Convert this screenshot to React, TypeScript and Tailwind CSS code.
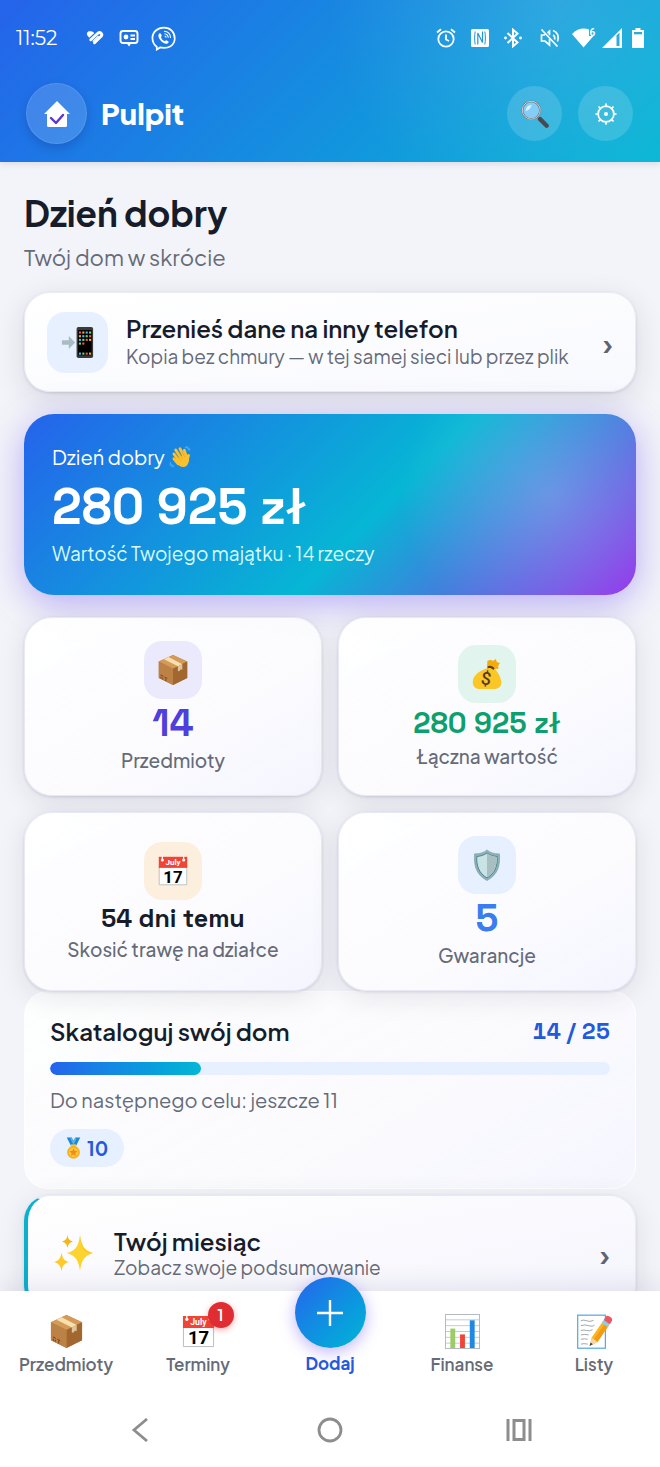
import type { ReactNode } from "react";

type IconProps = { className?: string };

function PackageIcon({ className }: IconProps) {
  return (
    <svg viewBox="0 0 36 36" className={className} aria-hidden="true">
      <path d="M18 1 34 8.500v18.500L18 35 2 27V8.500z" fill="#b3793f" />
      <path d="M18 1 34 8.500 18 16.500 2 8.500z" fill="#d39a58" />
      <path d="M18 16.500V35l16-8V8.500z" fill="#a1672f" />
      <path d="M2 8.500 18 16.500V35L2 27z" fill="#bb8145" />
      <path d="M13 3.400 28.500 11.400l-5 2.500L7.800 5.900z" fill="#f8dfae" />
      <path d="M23.500 13.900l5-2.500v6.200l-1.700-.4-1.600 1.900-1.700.2z" fill="#dec39b" />
      <path d="M4 23.500l3 1.500M4.500 25.500v2M6.500 26.500v2M8.500 26l3 1.400M10 27.500v3" stroke="#70431c" strokeWidth="1" fill="none" />
    </svg>
  );
}

function CalendarIcon({ className }: IconProps) {
  return (
    <svg viewBox="0 0 36 36" className={className} aria-hidden="true">
      <path d="M2.500 12h31v21.500h-31z" fill="#fff" stroke="#b5bcc0" />
      <path d="M2 2h32v12.500H2z" fill="#f04437" />
      <circle cx="6" cy="5.500" r="1.700" fill="#fff" />
      <circle cx="30" cy="5.500" r="1.700" fill="#fff" />
      <path d="M6 1v4M30 1v4" stroke="#fff" strokeWidth="1.300" />
      <text x="18" y="11.500" textAnchor="middle" fontSize="9" fontWeight="700" fill="#fff" fontFamily="Roboto, sans-serif">July</text>
      <text x="18" y="31" textAnchor="middle" fontSize="19" fontWeight="700" fill="#000" fontFamily="Roboto, sans-serif">17</text>
    </svg>
  );
}

function MoneyBagIcon({ className }: IconProps) {
  return (
    <svg viewBox="0 0 36 36" className={className} aria-hidden="true">
      <path d="M18 9.500 18.500 3l4-1 2 1.500L28 1l1 3.500 3.500 1-2 3.500.5 3-5 .5z" fill="#f5ab0c" />
      <path d="M19 11c4-1.500 7 0 9.500 3 3 4 6 10 5.500 15-.4 4-4 6-9 6H10c-5 0-8-3-8-8 0-9 10-13 17-16z" fill="#fcc626" />
      <path d="M18.500 9.500c3-1.500 6-.5 8 2.300l-1.500 1.700c-2-2-4-2.700-6.500-1.700z" fill="#5d3f32" />
      <text x="17" y="30" textAnchor="middle" fontSize="20" fontWeight="500" fill="#553b2d" fontFamily="Roboto, sans-serif" transform="rotate(8 17 24)">$</text>
    </svg>
  );
}

function ShieldIcon({ className }: IconProps) {
  return (
    <svg viewBox="0 0 36 36" className={className} aria-hidden="true">
      <path d="M18 1c3 3 8 4.500 14 4.500C33 19 30 29 18 35.500 6 29 3 19 4 5.500 10 5.500 15 4 18 1z" fill="#8fb0b8" stroke="#769ca5" strokeWidth=".7" />
      <path d="M18 4.500c3.500 2.500 7 3.500 11.500 4C30 19 27 27.500 18 32.500 9 27.500 6 19 6.500 8.500 11 8 14.500 7 18 4.500z" fill="#c9e3e5" stroke="#40808c" strokeWidth="1" />
      <path d="M18 5.200c3.500 2.300 7 3.400 10.800 3.800C29.300 19 26.500 27 18 31.800z" fill="#a9bec3" />
    </svg>
  );
}

function PhoneTransferIcon({ className }: IconProps) {
  const dots = ["#e95b52", "#f6a934", "#53b5f1", "#79cf74"];
  return (
    <svg viewBox="0 0 36 36" className={className} aria-hidden="true">
      <path d="M1 15.500h7.500V11L15.500 18l-7 7v-4.500H1z" fill="#a9bcc4" />
      <rect x="17" y="1" width="18" height="34" rx="2" fill="#3a3a3c" />
      <rect x="18.500" y="4.500" width="15" height="27.500" fill="#000" />
      {[6, 10, 14, 18].map((y, row) =>
        [19.500, 23.200, 26.900, 30.600].slice(0, row === 3 ? 2 : 4).map((x, col) => (
          <rect key={`${x}-${y}`} x={x} y={y} width="2.300" height="2.300" fill={dots[(row + col) % 4]} />
        ))
      )}
      {[19.500, 23.200, 26.900, 30.600].map((x, col) => (
        <rect key={x} x={x} y="29" width="2.300" height="2.300" fill={dots[(col + 2) % 4]} />
      ))}
    </svg>
  );
}

function WaveIcon({ className }: IconProps) {
  return (
    <svg viewBox="0 0 36 36" className={className} aria-hidden="true">
      <g fill="none" stroke="#fbc02d" strokeWidth="4.600" strokeLinecap="round">
        <path d="M8 13l9 12M11 6.500l10 15M18 4.500l7.500 14.500M25 7l4 13M8 21l7 8" />
        <path d="M32 15.500c-1.500 3-2 5-1.500 9" />
      </g>
      <path d="M11 21l16-8 5 8c1 7-2 13-8 13.500-5 .5-9-3-12-7z" fill="#fbc02d" />
      <path d="M11.500 13.500l7 9M15.500 9.500l6.500 11M21.500 9l4.500 9" stroke="#e39a20" strokeWidth="1" fill="none" />
      <path d="M26 2c3 0 5.500 2 6 5M28 .8c3.500.6 6 3.200 6.200 6.500M2 26c.5 3.500 3 6 6.500 6.500M1 29c1 3 3.500 5 6.500 5.500" stroke="#6ec5f5" strokeWidth="1.100" fill="none" />
    </svg>
  );
}

function MedalIcon({ className }: IconProps) {
  return (
    <svg viewBox="0 0 24 36" className={className} aria-hidden="true">
      <path d="M1 1h8l3 5 3-5h8l-6.500 13h-9z" fill="#1f86d6" />
      <path d="M9 1l3 5 3-5 2 2-5 10L6 1z" fill="#51b2ef" />
      <path d="M8 12h8v4H8z" fill="#f5c43a" />
      <circle cx="12" cy="25" r="10.500" fill="#fbb117" />
      <circle cx="12" cy="25" r="7.500" fill="#ffca3f" />
      <path d="M12 18.500l2 4.200 4.600.6-3.400 3.200.9 4.600-4.100-2.300-4.100 2.300.9-4.600-3.400-3.200 4.600-.6z" fill="#f28c1c" />
    </svg>
  );
}

function SparklesIcon({ className }: IconProps) {
  return (
    <svg viewBox="0 0 40 38" className={className} aria-hidden="true">
      <path d="M26 1c1.500 11 4 15.500 13 18-9 3-11.500 7.500-13 18-1.500-10.500-4-15-13-18 9-2.500 11.500-7 13-18z" fill="#fdd32f" />
      <path d="M26 1c1.500 11 4 15.500 13 18-7 .5-12-2-13-18z" fill="#f7c01b" opacity=".6" />
      <path d="M13.500 1c.8 4.200 2 5.500 5.500 6.500-3.500 1.200-4.700 2.500-5.500 6.500-.8-4-2-5.300-5.500-6.500 3.500-1 4.700-2.300 5.500-6.500z" fill="#f4b619" />
      <path d="M7.500 18.500c1 6 2.500 8 7.500 9.500-5 1.600-6.500 3.600-7.500 9-1-5.400-2.500-7.400-7.500-9 5-1.500 6.500-3.500 7.500-9.500z" fill="#fdc92b" />
    </svg>
  );
}

function ChartIcon({ className }: IconProps) {
  return (
    <svg viewBox="0 0 36 36" className={className} aria-hidden="true">
      <rect x=".5" y=".5" width="35" height="35" fill="#fff" stroke="#b3bbc0" />
      <path d="M1 6h34M1 12h34M1 18h34M1 24h34M1 30h34" stroke="#bcc3c7" strokeWidth=".9" />
      <path d="M5.500 15h5v20h-5z" fill="#9ccc65" />
      <path d="M15.500 21h5v14h-5z" fill="#f04437" />
      <path d="M25.500 6.500h5V35h-5z" fill="#1e88e5" />
    </svg>
  );
}

function MemoIcon({ className }: IconProps) {
  return (
    <svg viewBox="0 0 36 36" className={className} aria-hidden="true">
      <rect x=".7" y="1.200" width="28.500" height="34" fill="#fff" stroke="#5cabe0" strokeWidth="1.300" />
      <path d="M4 7q3-1.500 6 0t7-.5M4 12q4-1.500 8 0t6-.5M4 17q3-1 6 0t6-1M4 21.500q4-1 8 0M4 26q4-1 7 0M4 31q3-1 7 0" stroke="#9ea4a8" strokeWidth="1" fill="none" />
      <path d="M15 24.500 27 7l6 4.200-12 17.500-7.500 4z" fill="#fdb51d" />
      <path d="M17.500 26 29.500 8.500l3.500 2.700-12 17.500z" fill="#f59a14" />
      <path d="M15 24.500l6 4.200-7.700 4z" fill="#f7d7a5" />
      <path d="M14 29.300l2.300 1.700-3.500 1.900z" fill="#3f3f41" />
      <path d="M25.500 9.200 28 5.500l6 4.200-2.500 3.700z" fill="#89cfe5" />
      <path d="M27.500 6.200l2.600-3.900c1.300-1.800 7.500 2 6 4.500L33.800 10.500z" fill="#ee5660" />
    </svg>
  );
}

function SearchIcon({ className }: IconProps) {
  return (
    <svg viewBox="0 0 30 30" className={className} aria-hidden="true">
      <path d="M17.500 18.500l3.500 3" stroke="#8a8f94" strokeWidth="3" />
      <path d="M20.500 20.500l7 7" stroke="#474b50" strokeWidth="4.600" strokeLinecap="round" />
      <circle cx="11" cy="11" r="9.500" fill="#84cdf7" stroke="#686f75" strokeWidth="2" />
      <circle cx="11" cy="11" r="9.600" fill="none" stroke="#d3d7da" strokeWidth="1" />
      <path d="M5 12c0-4 2.500-6.500 6.500-7-1 3.500-3 6-6.500 7z" fill="#d9f2ff" />
    </svg>
  );
}

function GearIcon({ className }: IconProps) {
  return (
    <svg viewBox="0 0 24 24" className={className} fill="none" stroke="#fff" strokeWidth="1.900" strokeLinecap="round" aria-hidden="true">
      <circle cx="12" cy="12" r="8.600" />
      <path d="M12 1.200v2.500M12 20.300v2.500M1.200 12h2.500M20.300 12h2.500M4.400 4.400l1.700 1.700M17.900 17.900l1.700 1.700M4.400 19.600l1.700-1.700M17.900 6.100l1.700-1.700" />
      <circle cx="12" cy="12" r="2.200" fill="#fff" stroke="none" />
    </svg>
  );
}

function HomeCheckIcon({ className }: IconProps) {
  return (
    <svg viewBox="0 0 26 26" className={className} aria-hidden="true">
      <path d="M13 0 26 13h-3v11.500a1.500 1.500 0 0 1-1.500 1.500h-17A1.500 1.500 0 0 1 3 24.500V13H0z" fill="#fff" />
      <path d="M7 17l5 5 7-8" fill="none" stroke="#5b35d5" strokeWidth="2.400" strokeLinecap="round" strokeLinejoin="round" />
    </svg>
  );
}

function StatusBar() {
  return (
    <div className="flex h-[76px] items-center pl-4 pr-4 text-white">
      <span className="w-[70px] font-['Montserrat','Plus_Jakarta_Sans','Inter',sans-serif] text-xl">11:52</span>
      <div className="flex items-center gap-[15px]">
        <svg viewBox="0 0 18 16" className="h-4 w-[18px]" aria-hidden="true">
          <path d="M4.300 1.300C2 .8.200 3 1.200 5.200L3.200 7.700l5.200-4.600C7.200 1.800 5.800.9 4.300 1.300z" fill="#fff" />
          <path d="M4.800 9.700 11.800 3.300c2.500-2 5.200.8 3.300 3L8.500 12.800" fill="none" stroke="#fff" strokeWidth="2.900" strokeLinecap="round" />
          <path d="M6.800 11.400 12.500 6" fill="none" stroke="#fff" strokeWidth="1.400" />
        </svg>
        <svg viewBox="0 0 20 18" className="h-[18px] w-5" fill="none" stroke="#fff" strokeWidth="1.900" aria-hidden="true">
          <rect x="1.500" y="2" width="17" height="12" rx="2.500" />
          <circle cx="7" cy="8" r="2.400" fill="#fff" stroke="none" />
          <path d="M11.500 6.500h4.500M11.500 10h4.500" />
          <path d="M7.500 14h5L10 17.500z" fill="#fff" stroke="none" />
        </svg>
        <svg viewBox="0 0 26 26" className="-ml-[3px] size-[25px]" fill="none" stroke="#fff" strokeWidth="1.800" aria-hidden="true">
          <path d="M6 21.500v3l3.500-2.200c9 1.500 15-2 15.200-9.300C24.700 6 20 1.700 13.500 1.700S1.500 6 1.500 12.500c0 3.800 1.600 7 4.500 9z" />
          <path d="M8 8.500c1-1.700 2-1 3 .8.700 1.300-.7 1.600-.6 2.400.5 2 2 3.300 3.700 4 .9.300 1-1.400 2.400-.7 2.400 1.200 2.400 2 .6 3.200C13.500 20 6 12.500 8 8.500z" fill="#fff" stroke="none" />
          <path d="M13.500 5.500c4 .2 6.700 3 6.800 7M14 8c2.500.3 3.800 1.800 4 4.200M14.300 10.400c1 .2 1.400.7 1.500 1.700" strokeWidth="1.100" />
        </svg>
      </div>
      <div className="ml-auto flex items-center">
        <svg viewBox="0 0 20 20" className="mr-[15px] size-5" fill="none" stroke="#fff" strokeWidth="1.800" aria-hidden="true">
          <circle cx="10" cy="11" r="7.700" />
          <path d="M10 6.500V11.500l3 1.500M1 4.500l4-3.300M19 4.500l-4-3.300" />
        </svg>
        <svg viewBox="0 0 18 18" className="mr-[15px] size-[18px]" aria-hidden="true">
          <rect width="18" height="18" rx="1.500" fill="#fff" />
          <path d="M4.200 2.500c-.8 4-.8 9 0 13M13.800 2.500c.8 4 .8 9 0 13" stroke="#1e95df" strokeWidth="1" fill="none" />
          <path d="M6.800 15.500V4l4.700 9.500V2.500" stroke="#1e95df" strokeWidth="1.200" fill="none" />
        </svg>
        <svg viewBox="0 0 18 20" className="mr-[18px] h-5 w-[18px]" fill="none" stroke="#fff" strokeWidth="2" aria-hidden="true">
          <path d="M3.500 5 13.500 14.500 9 18.300V1.700l4.500 3.800L3.500 15" />
          <circle cx="1.500" cy="10" r="1.400" fill="#fff" stroke="none" />
          <circle cx="16.500" cy="10" r="1.400" fill="#fff" stroke="none" />
        </svg>
        <svg viewBox="0 0 20 20" className="mr-3 size-5" fill="none" stroke="#fff" strokeWidth="1.700" aria-hidden="true">
          <path d="M1.500 1.500l16 17M5 7H1.500v6H5l4.500 4v-6M7.500 5l2-1.800v4M13 7c1.500.8 2 2.500 1.700 4.500M13 2.500c4.800 1.500 6.300 6.500 4.500 11" />
        </svg>
        <svg viewBox="0 0 24 20" className="mr-1.5 h-5 w-6" aria-hidden="true">
          <path d="M0 6C5 .5 12-.500 17 1.500V8h4.500L11.500 19.500z" fill="#fff" />
          <text x="17.500" y="7.500" fontSize="10" fontWeight="700" fill="#fff" fontFamily="Roboto, sans-serif">6</text>
        </svg>
        <svg viewBox="0 0 20 20" className="mr-2.5 size-5" aria-hidden="true">
          <path d="M20 0v20H0z" fill="#fff" />
          <path d="M14.500 7.500v10.500h3V4.500z" fill="#2dabdc" />
        </svg>
        <svg viewBox="0 0 12 20" className="h-5 w-3" aria-hidden="true">
          <path d="M3.500 0h5v2H12v18H0V2h3.500z" fill="#fff" />
          <path d="M2 4h8v2.300H2z" fill="#2dabdc" />
        </svg>
      </div>
    </div>
  );
}

function Header() {
  return (
    <header className="shrink-0 bg-[radial-gradient(circle_at_85%_0%,rgba(255,255,255,0.13),transparent_40%),linear-gradient(135deg,#2563eb,#06b6d4)] shadow-[0_2px_6px_rgba(30,41,90,0.12)]">
      <StatusBar />
      <div className="flex items-center pb-[18px] pl-[26px] pr-[27px] pt-[7px]">
        <div className="flex size-[61px] items-center justify-center rounded-full border border-white/10 bg-white/15 shadow-[0_4px_10px_rgba(15,40,120,0.25)]">
          <HomeCheckIcon className="size-[26px]" />
        </div>
        <h1 className="ml-3.5 text-[29px] font-extrabold text-white">Pulpit</h1>
        <div className="ml-auto flex gap-4">
          <button type="button" aria-label="Szukaj" className="flex size-[55px] items-center justify-center rounded-full bg-white/15">
            <SearchIcon className="size-7" />
          </button>
          <button type="button" aria-label="Ustawienia" className="flex size-[55px] items-center justify-center rounded-full bg-white/15">
            <GearIcon className="size-[22px]" />
          </button>
        </div>
      </div>
    </header>
  );
}

function Chevron() {
  return (
    <span className="pt-0.5 text-3xl leading-8 font-semibold text-[#5f6470]" aria-hidden="true">
      ›
    </span>
  );
}

const stats = [
  {
    icon: <PackageIcon className="size-8" />,
    tile: "bg-[#ebeafc]",
    value: "14",
    valueStyle: "text-[38px] leading-[48px] font-bold text-[#4f3fdc]",
    label: "Przedmioty",
  },
  {
    icon: <MoneyBagIcon className="size-8" />,
    tile: "bg-[#e1f5ee]",
    value: "280 925 zł",
    valueStyle: "text-[29px] leading-10 font-bold text-[#0e9f6e]",
    label: "Łączna wartość",
  },
  {
    icon: <CalendarIcon className="size-8" />,
    tile: "bg-[#fdefdd]",
    value: "54 dni temu",
    valueStyle: "text-[25px] leading-9 font-bold text-[#171c2b]",
    label: "Skosić trawę na działce",
  },
  {
    icon: <ShieldIcon className="size-8" />,
    tile: "bg-[#e6f0ff]",
    value: "5",
    valueStyle: "text-[38px] leading-[48px] font-bold text-[#3b7cf0]",
    label: "Gwarancje",
  },
];

function StatCard({ icon, tile, value, valueStyle, label }: { icon: ReactNode; tile: string; value: string; valueStyle: string; label: string }) {
  return (
    <button
      type="button"
      className="flex h-[179px] flex-col items-center justify-center rounded-[28px] border border-[#dcdcf0]/60 bg-[linear-gradient(150deg,rgba(255,255,255,0.95),rgba(252,252,255,0.85)_60%,#f4f4ff)] shadow-[0_1px_3px_rgba(30,30,60,0.14),0_6px_28px_rgba(30,30,60,0.1)]"
    >
      <span className={`flex size-[58px] items-center justify-center rounded-[18px] ${tile}`}>{icon}</span>
      <span className={`font-['Space_Grotesk','Plus_Jakarta_Sans','Inter',sans-serif] ${valueStyle}`}>{value}</span>
      <span className="text-[19px] leading-[26px] font-medium text-[#666b78]">{label}</span>
    </button>
  );
}

function CatalogProgress() {
  const done = 14;
  return (
    <section className="rounded-[24px] border border-white/80 bg-[linear-gradient(150deg,rgba(255,255,255,0.85),rgba(252,252,255,0.8)_60%,rgba(245,245,255,0.9))] px-[25px] pb-[21px] pt-[23px]">
      <div className="flex items-center justify-between leading-8">
        <h3 className="text-2xl leading-8 font-semibold text-[#171c2b]">Skataloguj swój dom</h3>
        <span className="font-['Space_Grotesk','Plus_Jakarta_Sans','Inter',sans-serif] text-[23px] font-bold text-[#2459dc] tabular-nums">14 / 25</span>
      </div>
      <div className="mt-[15px] h-[13px] overflow-hidden rounded-full bg-[#e6f0ff]">
        <div
          className="h-full rounded-full bg-linear-to-r from-[#2563eb] to-[#06b6d4]"
          style={{ width: `${Math.round(((done - 10) / 15) * 100)}%` }}
        />
      </div>
      <p className="mt-3 text-xl leading-[26px] text-[#666b78]">Do następnego celu: jeszcze 11</p>
      <span className="mt-4 inline-flex h-[38px] items-center gap-1.5 rounded-full bg-[#e6f0ff] px-4 text-[19px] font-bold text-[#2459dc]">
        <MedalIcon className="h-[22px] w-[15px]" />
        10
      </span>
    </section>
  );
}

const navLeft = [
  { label: "Przedmioty", icon: <PackageIcon className="size-[35px]" />, badge: 0 },
  { label: "Terminy", icon: <CalendarIcon className="size-[35px]" />, badge: 1 },
];

const navRight = [
  { label: "Finanse", icon: <ChartIcon className="size-[35px]" />, badge: 0 },
  { label: "Listy", icon: <MemoIcon className="size-[35px]" />, badge: 0 },
];

function NavItem({ label, icon, badge }: { label: string; icon: ReactNode; badge: number }) {
  return (
    <a href="#" className="flex flex-col items-center pt-[23px] text-[17px] leading-6 font-semibold text-[#666b78]">
      <span className="relative mb-[3px]">
        {icon}
        {badge > 0 && (
          <span className="absolute -right-[18px] -top-3 flex size-[26px] items-center justify-center rounded-full bg-[#e02d33] text-base text-white shadow-[0_2px_6px_rgba(224,45,51,0.4)]">
            {badge}
          </span>
        )}
      </span>
      {label}
    </a>
  );
}

function BottomNav() {
  return (
    <nav className="relative shrink-0 bg-white shadow-[0_-4px_24px_rgba(40,40,90,0.10)]">
      <div className="grid h-[101px] grid-cols-5">
        {navLeft.map((item) => (
          <NavItem key={item.label} {...item} />
        ))}
        <a href="#" className="-mt-3.5 flex flex-col items-center text-[17px] leading-6 font-bold text-[#2459dc]">
          <span className="mb-[3px] flex size-[71px] items-center justify-center rounded-full bg-linear-to-br from-[#2563eb] to-[#06b6d4] shadow-[0_4px_16px_rgba(99,70,240,0.4)]">
            <svg viewBox="0 0 28 28" className="size-7" stroke="#fff" strokeWidth="2.400" aria-hidden="true">
              <path d="M14 1v26M1 14h26" />
            </svg>
          </span>
          Dodaj
        </a>
        {navRight.map((item) => (
          <NavItem key={item.label} {...item} />
        ))}
      </div>
      <div className="grid h-[75px] grid-cols-3 items-center justify-items-center px-[46px]">
        <button type="button" aria-label="Wstecz">
          <svg viewBox="0 0 24 24" className="size-6" fill="none" stroke="#8d8d8d" strokeWidth="2.800">
            <path d="M18 1 5 12l13 11" />
          </svg>
        </button>
        <button type="button" aria-label="Ekran główny">
          <svg viewBox="0 0 26 26" className="size-[26px]" fill="none" stroke="#8d8d8d" strokeWidth="2.800">
            <circle cx="13" cy="13" r="11" />
          </svg>
        </button>
        <button type="button" aria-label="Ostatnie">
          <svg viewBox="0 0 26 22" className="h-[22px] w-[26px]" fill="none" stroke="#8d8d8d" strokeWidth="3">
            <path d="M2 0v22M24 0v22M8 1.500h10v19H8z" />
          </svg>
        </button>
      </div>
    </nav>
  );
}

export default function App() {
  return (
    <div className="flex h-screen flex-col bg-[#f3f4f9] font-['Plus_Jakarta_Sans','Inter',sans-serif]">
      <Header />
      <main className="min-h-0 flex-1 overflow-hidden px-6 pt-[29px]">
        <h2 className="text-[35px] leading-[44px] font-bold text-[#171c2b]">Dzień dobry</h2>
        <p className="mt-2 text-[22px] leading-7 text-[#666b78]">Twój dom w skrócie</p>

        <button
          type="button"
          className="mt-[21px] flex h-[100px] w-full items-center rounded-[26px] border border-[#dfdff0]/60 bg-linear-to-br from-white to-[#f8f9fe] px-[22px] text-left shadow-[0_1px_3px_rgba(30,30,60,0.14),0_8px_30px_rgba(30,30,60,0.12)]"
        >
          <span className="flex size-[61px] shrink-0 items-center justify-center rounded-[18px] bg-[#e6f0ff]">
            <PhoneTransferIcon className="size-[33px]" />
          </span>
          <span className="ml-[18px] min-w-0 flex-1 whitespace-nowrap">
            <span className="block text-2xl leading-7 font-semibold text-[#171c2b]">Przenieś dane na inny telefon</span>
            <span className="block text-[19px] leading-7 text-[#666b78]">Kopia bez chmury — w tej samej sieci lub przez plik</span>
          </span>
          <Chevron />
        </button>

        <section className="mt-[22px] rounded-[30px] bg-[radial-gradient(circle_at_86%_45%,rgba(255,255,255,0.2),transparent_28%),linear-gradient(135deg,#2563eb,#06b6d4_57%,#9333ea)] px-7 pb-7 pt-[29px] text-white shadow-[0_8px_36px_rgba(99,70,240,0.42)]">
          <p className="flex items-center gap-1 text-xl leading-7">
            Dzień dobry <WaveIcon className="size-[22px]" />
          </p>
          <p className="mt-1.5 font-['Space_Grotesk','Plus_Jakarta_Sans','Inter',sans-serif] text-[50px] leading-[60px] font-bold">280 925 zł</p>
          <p className="mt-0.5 text-[19px] leading-7 text-[#d8fbff]">Wartość Twojego majątku · 14 rzeczy</p>
        </section>

        <div className="mt-[22px] grid grid-cols-2 gap-4">
          {stats.map((stat) => (
            <StatCard key={stat.label} {...stat} />
          ))}
        </div>

        <CatalogProgress />

        <button
          type="button"
          className="mt-1.5 flex h-[116px] w-full items-center rounded-[26px] border border-l-4 border-[#dfdff0]/60 border-l-[#0bb0cc] bg-linear-to-br from-white to-[#f4f4fd] pl-[26px] pr-[25px] text-left shadow-[0_1px_3px_rgba(30,30,60,0.14),0_6px_28px_rgba(30,30,60,0.1)]"
        >
          <SparklesIcon className="h-[38px] w-10 shrink-0" />
          <span className="ml-5 flex-1">
            <span className="block text-2xl leading-7 font-semibold text-[#171c2b]">Twój miesiąc</span>
            <span className="block text-[19px] leading-6 text-[#666b78]">Zobacz swoje podsumowanie</span>
          </span>
          <Chevron />
        </button>
      </main>
      <BottomNav />
    </div>
  );
}
